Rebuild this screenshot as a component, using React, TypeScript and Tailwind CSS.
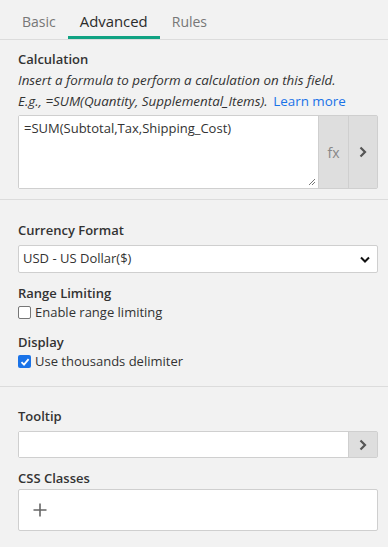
import React, { useState } from 'react';

const font = { fontFamily: '"Open Sans", "Liberation Sans", sans-serif' };

function Chevron({ className = '' }: { className?: string }) {
  return (
    <svg width="8" height="12" viewBox="0 0 8 12" className={className}>
      <path d="M1.5 1.5 L6 6 L1.5 10.5" fill="none" stroke="currentColor" strokeWidth="2.2" />
    </svg>
  );
}

export default function App() {
  const [tab] = useState('Advanced');
  const tabs = ['Basic', 'Advanced', 'Rules'];

  return (
    <div className="w-[388px] h-[547px] bg-[#f2f2f2] text-[#333] overflow-hidden text-[13px]" style={font}>
      <div className="h-[40px] flex pl-[10px] border-b border-[#dcdcdc]">
        {tabs.map((t) => (
          <div
            key={t}
            className={
              t === tab
                ? 'px-[12px] h-[39px] flex items-center text-[14.9px] text-[#2b2b2b] border-b-[3px] border-[#11a383] pt-[6px]'
                : 'px-[12px] h-[39px] flex items-center text-[14px] text-[#777] pt-[4px]'
            }
          >
            {t}
          </div>
        ))}
      </div>

      <section className="pl-[18px] pr-[10px] pt-[9px] pb-[10px] border-b border-[#dcdcdc]">
        <div className="font-semibold leading-[20px]">Calculation</div>
        <p className="italic leading-[21px] mt-[1px] text-[#333] text-[13.4px]">
          Insert a formula to perform a calculation on this field.
          <br />
          E.g., =SUM(Quantity, Supplemental_Items).{' '}
          <span className="not-italic text-[#1a73e8] ml-[2px]">Learn more</span>
        </p>
        <div className="mt-[3px] flex h-[74px] border border-[#cfcfcf] rounded-[2px]">
          <div className="flex-1 bg-white relative px-[5px] pt-[3px] leading-[18px]">
            =SUM(Subtotal,Tax,Shipping_Cost)
            <svg width="9" height="9" viewBox="0 0 9 9" className="absolute right-[2px] bottom-[2px]">
              <path d="M8 2 L2 8 M8 5 L5 8" stroke="#777" strokeWidth="1" />
            </svg>
          </div>
          <div className="w-[30px] bg-[#dedede] border-l border-[#cfcfcf] flex items-center justify-center text-[14px] text-[#888]">
            fx
          </div>
          <div className="w-[29px] bg-[#dedede] border-l border-[#cfcfcf] flex items-center justify-center text-[#555]">
            <Chevron />
          </div>
        </div>
      </section>

      <section className="pl-[18px] pr-[10px] pt-[20px] pb-[15px] border-b border-[#dcdcdc]">
        <div className="font-semibold leading-[20px]">Currency Format</div>
        <div className="mt-[5px] h-[28px] bg-white border border-[#cfcfcf] rounded-[2px] flex items-center justify-between pl-[4px] pr-[7px] text-[13px]">
          <span>USD - US Dollar($)</span>
          <svg width="10" height="7" viewBox="0 0 10 7">
            <path d="M1 1.5 L5 5.5 L9 1.5" fill="none" stroke="#111" strokeWidth="2" />
          </svg>
        </div>
        <div className="font-semibold leading-[20px] mt-[10px]">Range Limiting</div>
        <label className="flex items-center gap-[4px] leading-[19px]">
          <span className="w-[13px] h-[13px] bg-white border border-[#767676] rounded-[2px]" />
          Enable range limiting
        </label>
        <div className="font-semibold leading-[20px] mt-[10px]">Display</div>
        <label className="flex items-center gap-[4px] leading-[19px]">
          <span className="w-[13px] h-[13px] bg-[#1a73e8] rounded-[2px] flex items-center justify-center">
            <svg width="10" height="10" viewBox="0 0 10 10">
              <path d="M1.5 5.2 L4 7.7 L8.6 2.2" fill="none" stroke="white" strokeWidth="1.8" />
            </svg>
          </span>
          Use thousands delimiter
        </label>
      </section>

      <section className="pl-[18px] pr-[10px] pt-[19px]">
        <div className="font-semibold leading-[20px]">Tooltip</div>
        <div className="mt-[5px] flex h-[27px] border border-[#cfcfcf] rounded-[2px]">
          <div className="flex-1 bg-white" />
          <div className="w-[29px] bg-[#dedede] border-l border-[#cfcfcf] flex items-center justify-center text-[#555]">
            <Chevron />
          </div>
        </div>
        <div className="font-semibold leading-[20px] mt-[10px]">CSS Classes</div>
        <div className="mt-[1px] h-[42px] bg-white border border-[#cfcfcf] rounded-[2px] flex items-center pl-[14px]">
          <svg width="14" height="14" viewBox="0 0 14 14">
            <path d="M7 0.5 V13.5 M0.5 7 H13.5" stroke="#666" strokeWidth="1.6" />
          </svg>
        </div>
      </section>
    </div>
  );
}
